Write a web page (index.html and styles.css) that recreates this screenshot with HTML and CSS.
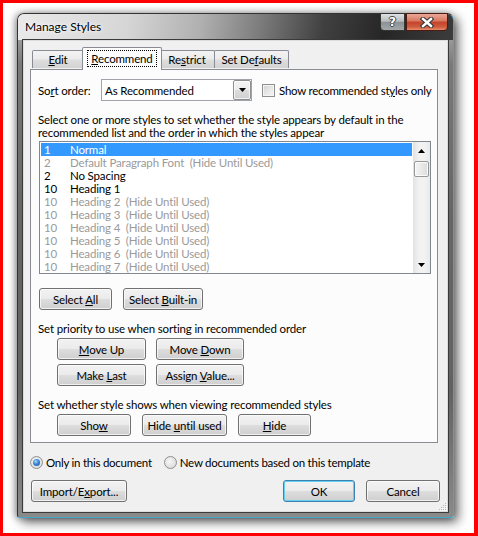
FILE: index.html
```html
<!DOCTYPE html>
<html>
<head>
<meta charset="utf-8">
<link rel="stylesheet" href="styles.css">
</head>
<body>
<div class="screen">
  <div class="window">
    <div class="titlebar">
      <span class="title">Manage Styles</span>
      <div class="caps">
        <div class="cap help">?</div>
        <div class="cap close">
          <svg width="16" height="11" viewBox="0 0 16 11">
            <path d="M4 2 L12 9 M12 2 L4 9" stroke="#3a3a3a" stroke-width="4.6" stroke-linecap="square" fill="none"/>
            <path d="M4 2 L12 9 M12 2 L4 9" stroke="#ffffff" stroke-width="2.4" stroke-linecap="square" fill="none"/>
          </svg>
        </div>
      </div>
    </div>
    <div class="client">
      <div class="tabs">
        <div class="tab t-edit"><span><u>E</u>dit</span></div>
        <div class="tab sel t-rec"><span class="focus"><u>R</u>ecommend</span></div>
        <div class="tab t-res"><span>Re<u>s</u>trict</span></div>
        <div class="tab t-def"><span>Set De<u>f</u>aults</span></div>
      </div>
      <div class="panel">
        <div class="sort-row">
          <span class="sort-label">So<u>r</u>t order:</span>
          <div class="combo">
            <span class="combo-text">As Recommended</span>
            <span class="combo-btn">
              <svg width="7" height="4" viewBox="0 0 7 4"><path d="M0 0 H7 L3.5 4 Z" fill="#000"/></svg>
            </span>
          </div>
          <span class="check"></span>
          <span class="check-label">Show recommended st<u>y</u>les only</span>
        </div>
        <p class="desc">Select one or more styles to set whether the style appears by default in the<br>recommended list and the order in which the styles appear</p>
        <div class="list">
          <div class="rows">
            <div class="row selected"><span class="num">1</span><span class="name">Normal</span></div>
            <div class="row dim"><span class="num">2</span><span class="name">Default Paragraph Font  (Hide Until Used)</span></div>
            <div class="row"><span class="num">2</span><span class="name">No Spacing</span></div>
            <div class="row"><span class="num">10</span><span class="name">Heading 1</span></div>
            <div class="row dim"><span class="num">10</span><span class="name">Heading 2  (Hide Until Used)</span></div>
            <div class="row dim"><span class="num">10</span><span class="name">Heading 3  (Hide Until Used)</span></div>
            <div class="row dim"><span class="num">10</span><span class="name">Heading 4  (Hide Until Used)</span></div>
            <div class="row dim"><span class="num">10</span><span class="name">Heading 5  (Hide Until Used)</span></div>
            <div class="row dim"><span class="num">10</span><span class="name">Heading 6  (Hide Until Used)</span></div>
            <div class="row dim"><span class="num">10</span><span class="name">Heading 7  (Hide Until Used)</span></div>
          </div>
          <div class="vscroll">
            <div class="arrow"><svg width="7" height="4" viewBox="0 0 7 4"><path d="M0 4 H7 L3.5 0 Z" fill="#000"/></svg></div>
            <div class="track"><div class="thumb"></div></div>
            <div class="arrow"><svg width="7" height="4" viewBox="0 0 7 4"><path d="M0 0 H7 L3.5 4 Z" fill="#000"/></svg></div>
          </div>
        </div>
        <div class="btn-row r-select">
          <button class="btn w73"><span>Select <u>A</u>ll</span></button>
          <button class="btn w80"><span>Select <u>B</u>uilt-in</span></button>
        </div>
        <p class="label l1">Set priority to use when sorting in recommended order</p>
        <div class="btn-row r-prio">
          <button class="btn w89"><span><u>M</u>ove Up</span></button>
          <button class="btn w88"><span>Move <u>D</u>own</span></button>
        </div>
        <div class="btn-row r-prio2">
          <button class="btn w89"><span>Make <u>L</u>ast</span></button>
          <button class="btn w88"><span>Assign <u>V</u>alue...</span></button>
        </div>
        <p class="label l2">Set whether style shows when viewing recommended styles</p>
        <div class="btn-row r-show">
          <button class="btn w74"><span>Sho<u>w</u></span></button>
          <button class="btn w85"><span>Hide <u>u</u>ntil used</span></button>
          <button class="btn w73"><span><u>H</u>ide</span></button>
        </div>
      </div>
      <div class="radio-row">
        <span class="radio on"><span class="dot"></span></span>
        <span class="radio-label">Only in this document</span>
        <span class="radio second"></span>
        <span class="radio-label">New documents based on this template</span>
      </div>
      <div class="bottom-row">
        <button class="btn w96"><span>Import/E<u>x</u>port...</span></button>
        <span class="spacer"></span>
        <button class="btn w72 default"><span>OK</span></button>
        <button class="btn w74"><span>Cancel</span></button>
      </div>
      <svg class="grip" width="10" height="10" viewBox="0 0 10 10">
        <g fill="#b8b8b8">
          <rect x="8" y="2" width="1" height="1"/><rect x="6" y="4" width="1" height="1"/><rect x="8" y="4" width="1" height="1"/>
          <rect x="4" y="6" width="1" height="1"/><rect x="6" y="6" width="1" height="1"/><rect x="8" y="6" width="1" height="1"/>
          <rect x="2" y="8" width="1" height="1"/><rect x="4" y="8" width="1" height="1"/><rect x="6" y="8" width="1" height="1"/><rect x="8" y="8" width="1" height="1"/>
        </g>
        <g fill="#ffffff">
          <rect x="9" y="3" width="1" height="1"/><rect x="7" y="5" width="1" height="1"/><rect x="9" y="5" width="1" height="1"/>
          <rect x="5" y="7" width="1" height="1"/><rect x="7" y="7" width="1" height="1"/><rect x="9" y="7" width="1" height="1"/>
          <rect x="3" y="9" width="1" height="1"/><rect x="5" y="9" width="1" height="1"/><rect x="7" y="9" width="1" height="1"/><rect x="9" y="9" width="1" height="1"/>
        </g>
      </svg>
    </div>
  </div>
</div>
</body>
</html>
```

FILE: styles.css
```css
* { box-sizing: border-box; }
html, body { margin: 0; padding: 0; }
body {
  font-family: "Lato", "Segoe UI", sans-serif;
  font-size: 11.5px;
  letter-spacing: -0.15px;
  color: #000;
  background: #fff;
}
u { text-decoration: underline; text-underline-offset: 1px; }
p { margin: 0; }

.screen {
  width: 478px;
  height: 536px;
  border: 3px solid #ff0000;
  border-right-width: 4px;
  background: #fff;
  padding: 10px 0 0 14px;
  overflow: hidden;
}

.window {
  width: 437px;
  height: 505px;
  border: 1px solid #333;
  border-right-color: #3fa9cc;
  border-bottom-color: #3fa9cc;
  border-radius: 7px 7px 3px 3px;
  background: linear-gradient(to bottom, #b9b9b9 0%, #7a7a7a 10%, #666 40%, #626262 75%, #8a8a8a 100%);
  box-shadow: 4px 4px 11px rgba(0,0,0,.6), -2px 0 7px rgba(0,0,0,.35);
  display: flex;
  flex-direction: column;
  align-items: center;
}

.titlebar {
  width: 100%;
  height: 26px;
  flex: none;
  display: flex;
  align-items: flex-start;
  border-radius: 6px 6px 0 0;
  background: linear-gradient(100deg, #e9e9e9 0%, #d6d6d6 25%, #b0b0b0 42%, #7a7a7a 56%, #404040 70%, #262626 84%, #3c3c3c 100%);
}
.title {
  margin-left: 7px;
  line-height: 26px;
  font-size: 12px;
  letter-spacing: 0;
  color: #000;
  text-shadow: 0 0 6px #fff, 0 0 3px #fff;
}
.caps {
  margin-left: auto;
  margin-right: 5px;
  margin-top: -1px;
  display: flex;
  gap: 1px;
}
.cap {
  height: 18px;
  border: 1px solid #353535;
  display: flex;
  align-items: center;
  justify-content: center;
}
.help {
  width: 25px;
  border-radius: 0 0 0 4px;
  background: linear-gradient(to bottom, #dde1e4 0%, #b9bdc0 45%, #8c9194 52%, #a3a8ab 100%);
  color: #fff;
  font-family: "DejaVu Sans", sans-serif;
  font-weight: bold;
  font-size: 12px;
  text-shadow: 1px 0 0 #444, -1px 0 0 #444, 0 1px 0 #444, 0 -1px 0 #444;
}
.close {
  width: 42px;
  border-radius: 0 0 4px 0;
  border-color: #4a1c12;
  background: linear-gradient(to bottom, #eaa796 0%, #d97a63 42%, #c3452e 52%, #cf5a3c 80%, #e68d6d 100%);
}

.client {
  width: 425px;
  height: 472px;
  flex: none;
  border: 1px solid #dcdcdc;
  box-shadow: 0 0 0 1px #3a3a3a;
  background: #f0f0f0;
  padding: 6px 9px 0 6px;
  position: relative;
}

.tabs {
  height: 22px;
  display: flex;
  align-items: flex-end;
  padding-left: 2px;
}
.tab {
  height: 18px;
  border: 1px solid #898c95;
  border-bottom: 0;
  border-radius: 2px 2px 0 0;
  background: linear-gradient(to bottom, #f3f3f3 0%, #ebebeb 48%, #dedede 52%, #d3d3d3 100%);
  display: flex;
  align-items: center;
  justify-content: center;
  margin-bottom: 1px;
  white-space: nowrap;
}
.t-edit { width: 52px; }
.t-res { width: 56px; margin-left: -1px; }
.t-def { width: 75px; margin-left: -1px; }
.tab.sel {
  width: 80px;
  height: 23px;
  margin: 0 -2px -1px -2px;
  background: #fcfcfc;
  position: relative;
  z-index: 2;
  align-items: flex-start;
  padding-top: 4px;
}
.focus {
  outline: 1px dotted #000;
  outline-offset: 1px;
  padding: 0 2px;
}

.panel {
  width: 408px;
  height: 374px;
  border: 1px solid #898c95;
  background: #fcfcfc;
  position: relative;
  z-index: 1;
  padding: 9px 0 0 7px;
}

.sort-row {
  height: 22px;
  display: flex;
  align-items: center;
  white-space: nowrap;
}
.sort-label { width: 63px; flex: none; }
.combo {
  width: 151px;
  height: 22px;
  flex: none;
  border: 1px solid #a0a4aa;
  background: #fff;
  display: flex;
  align-items: center;
}
.combo-text { padding-left: 3px; flex: 1; }
.combo-btn {
  width: 18px;
  height: 20px;
  border: 1px solid #8e8f8f;
  border-radius: 2px;
  background: linear-gradient(to bottom, #f4f4f4 0%, #ececec 48%, #dcdcdc 52%, #d0d0d0 100%);
  box-shadow: inset 0 0 0 1px rgba(255,255,255,.7);
  display: flex;
  align-items: center;
  justify-content: center;
}
.check {
  width: 13px;
  height: 13px;
  flex: none;
  margin-left: 10px;
  border: 1px solid #8f8f8f;
  background: linear-gradient(135deg, #cfd2d6 0%, #eaeaea 60%, #f5f5f5 100%);
  box-shadow: inset 0 0 0 1px #f4f4f4;
}
.check-label { margin-left: 4px; letter-spacing: -0.25px; }

.desc {
  margin-top: 12px;
  line-height: 13px;
  white-space: nowrap;
}

.list {
  margin-top: 2px;
  margin-left: 1px;
  width: 392px;
  height: 133px;
  border: 1px solid #828790;
  background: #fff;
  display: flex;
}
.rows {
  flex: 1;
  padding: 1px;
}
.row {
  height: 13px;
  line-height: 13px;
  display: flex;
  white-space: pre;
}
.row .num { width: 29px; padding-left: 3px; }
.row.dim { color: #9a9a9a; }
.row.selected { background: #3399ff; color: #fff; }
.vscroll {
  width: 17px;
  display: flex;
  flex-direction: column;
  background: linear-gradient(to right, #e2e2e2 0%, #f2f2f2 35%, #f2f2f2 70%, #e9e9e9 100%);
}
.arrow {
  height: 17px;
  display: flex;
  align-items: center;
  justify-content: center;
}
.track { flex: 1; padding: 2px 1px 0 1px; }
.thumb {
  height: 16px;
  border: 1px solid #979797;
  border-radius: 2px;
  background: linear-gradient(to right, #f5f5f5 0%, #e9e9e9 50%, #dcdcdc 100%);
  box-shadow: inset 0 0 0 1px rgba(255,255,255,.8);
}

.btn {
  height: 22px;
  padding: 0;
  margin: 0;
  border: 1px solid #707070;
  border-radius: 3px;
  background: linear-gradient(to bottom, #f2f2f2 0%, #ebebeb 48%, #dddddd 52%, #cfcfcf 100%);
  box-shadow: inset 0 0 0 1px rgba(255,255,255,.7);
  font: inherit;
  letter-spacing: inherit;
  color: #000;
  display: flex;
  align-items: center;
  justify-content: center;
  white-space: nowrap;
}
.btn.default {
  border-color: #3c7fb1;
  box-shadow: inset 0 0 0 1px #67d0f2;
}
.w72 { width: 72px; }
.w73 { width: 73px; }
.w74 { width: 74px; }
.w80 { width: 80px; }
.w85 { width: 85px; }
.w88 { width: 88px; }
.w89 { width: 89px; }
.w96 { width: 96px; }

.btn-row { display: flex; }
.r-select { margin-top: 14px; margin-left: 1px; gap: 11px; }
.label { line-height: 13px; margin-top: 12px; white-space: nowrap; }
.r-prio { margin-top: 3px; margin-left: 19px; gap: 10px; }
.r-prio2 { margin-top: 4px; margin-left: 19px; gap: 10px; }
.r-show { margin-top: 3px; margin-left: 19px; gap: 11px; }

.radio-row {
  margin-top: 13px;
  height: 13px;
  display: flex;
  align-items: center;
  white-space: nowrap;
  letter-spacing: -0.25px;
}
.radio {
  width: 13px;
  height: 13px;
  flex: none;
  border-radius: 50%;
  border: 1px solid #8e8f8f;
  background: radial-gradient(circle at 40% 40%, #f6f6f6 0%, #e2e2e2 60%, #d0d0d0 100%);
  display: flex;
  align-items: center;
  justify-content: center;
}
.radio .dot {
  width: 7px;
  height: 7px;
  border-radius: 50%;
  background: radial-gradient(circle at 40% 35%, #a9dcfb 0%, #3a85d4 45%, #1b4f98 100%);
}
.radio-label { margin-left: 3px; }
.radio.second { margin-left: 12px; }

.bottom-row {
  margin-top: 11px;
  margin-left: 1px;
  margin-right: -2px;
  display: flex;
  gap: 11px;
}
.spacer { flex: 1; }

.grip {
  position: absolute;
  right: 0;
  bottom: 0;
}
```
